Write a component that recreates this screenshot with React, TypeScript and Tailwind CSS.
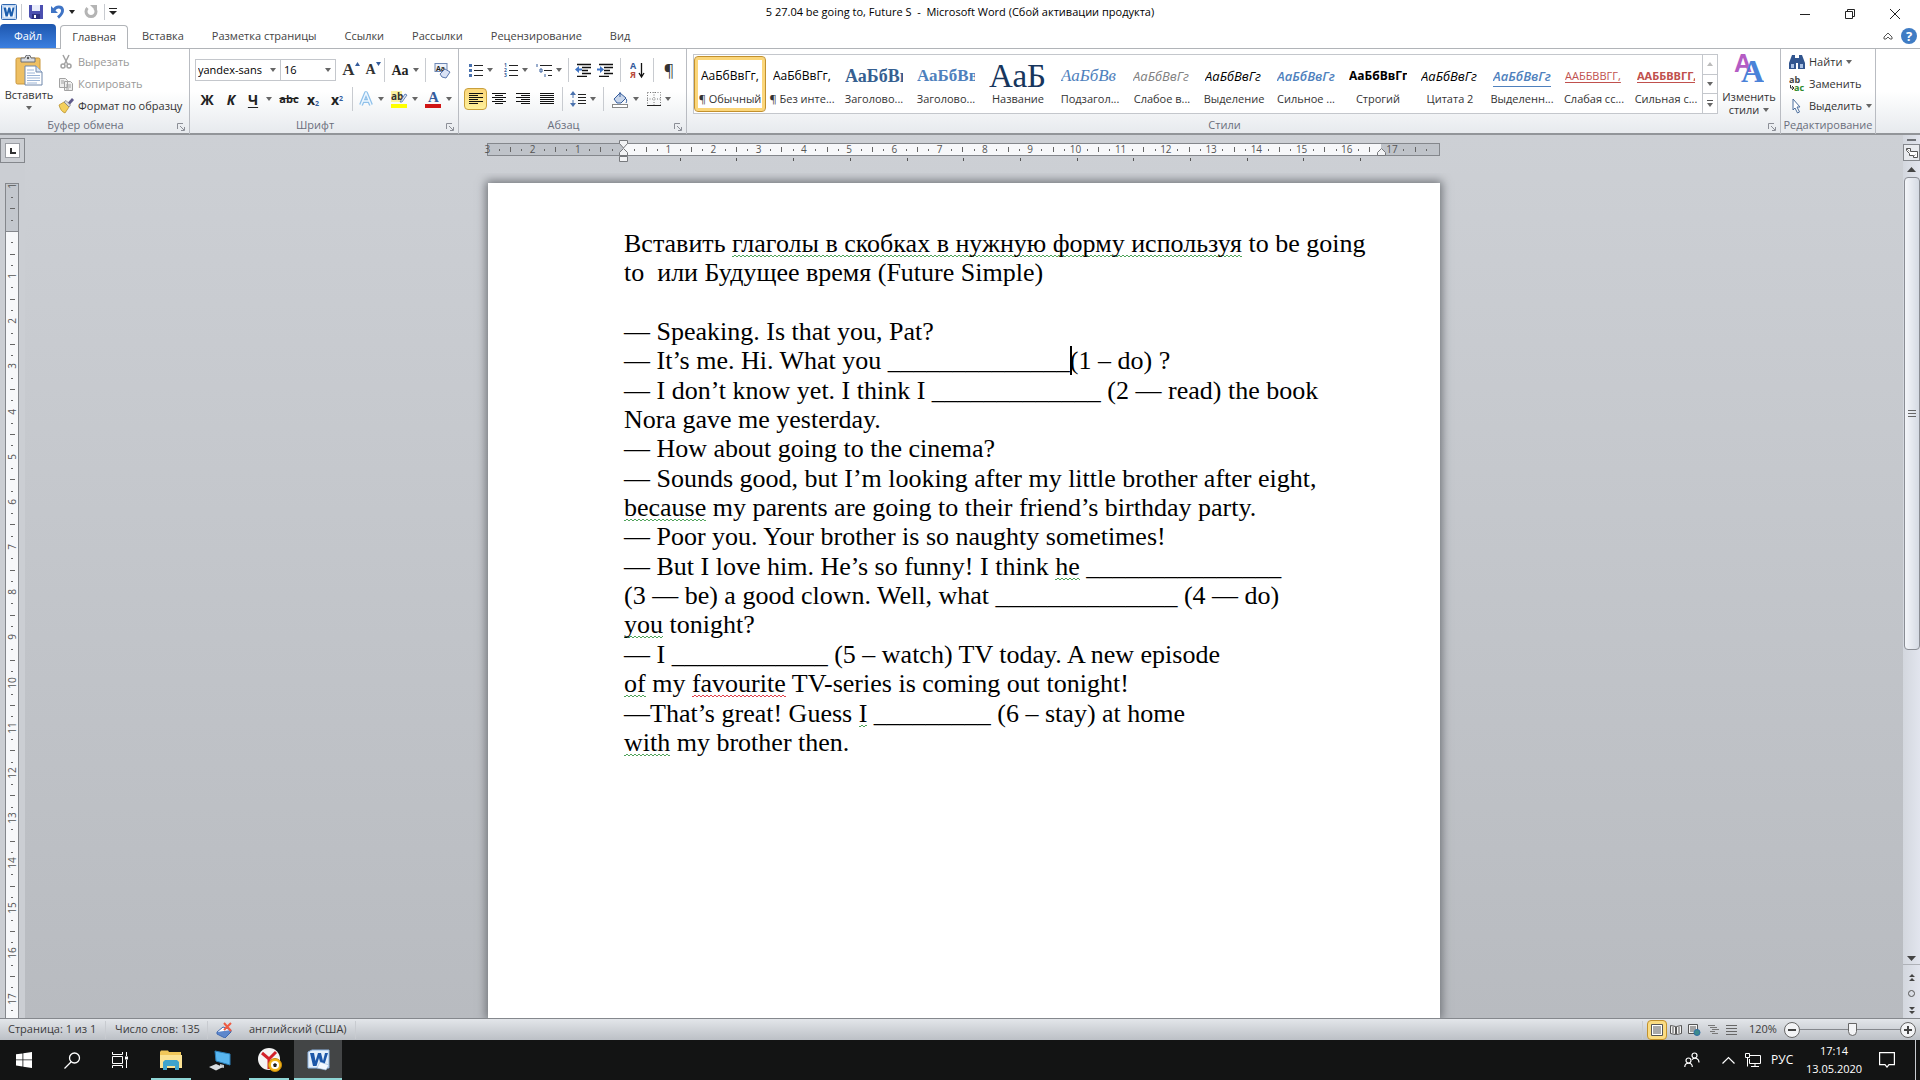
import { ReactNode } from 'react'
import clsx from 'clsx'

const tabs = ['Вставка', 'Разметка страницы', 'Ссылки', 'Рассылки', 'Рецензирование', 'Вид']

const styleItems = [
    { name: '¶ Обычный', sample: 'АаБбВвГг,', look: 'text-[12px] text-black', active: true },
    { name: '¶ Без инте...', sample: 'АаБбВвГг,', look: 'text-[12px] text-black' },
    { name: 'Заголово...', sample: 'АаБбВв', look: "font-['Liberation_Serif',serif] text-[18px] font-bold text-[#365f91]" },
    { name: 'Заголово...', sample: 'АаБбВв', look: "font-['Liberation_Serif',serif] text-[17px] font-bold text-[#4f81bd]" },
    { name: 'Название', sample: 'АаБ', look: "font-['Liberation_Serif',serif] text-[33px] text-[#17365d]" },
    { name: 'Подзагол...', sample: 'АаБбВв', look: "font-['Liberation_Serif',serif] text-[17px] italic text-[#4f81bd]" },
    { name: 'Слабое в...', sample: 'АаБбВвГг', look: 'text-[13px] italic text-[#808080]' },
    { name: 'Выделение', sample: 'АаБбВвГг', look: 'text-[13px] italic text-black' },
    { name: 'Сильное ...', sample: 'АаБбВвГг', look: 'text-[13px] font-semibold italic text-[#4f81bd]' },
    { name: 'Строгий', sample: 'АаБбВвГг,', look: 'text-[12px] font-bold text-black' },
    { name: 'Цитата 2', sample: 'АаБбВвГг', look: 'text-[13px] italic text-black' },
    { name: 'Выделенн...', sample: 'АаБбВвГг', look: 'text-[13px] font-semibold italic text-[#4f81bd] border-b border-[#4f81bd]' },
    { name: 'Слабая сс...', sample: 'ААББВВГГ,', look: 'text-[11px] text-[#c0504d] underline underline-offset-2' },
    { name: 'Сильная с...', sample: 'ААББВВГГ,', look: 'text-[11px] font-bold text-[#c0504d] underline underline-offset-2' },
]

const CM = 45.24

function Chevron({ className = 'text-[#666]' }: { className?: string }) {
    return (
        <svg width="6" height="4" viewBox="0 0 6 4" className={clsx('shrink-0', className)}>
            <path d="M0 0h6L3 4z" fill="currentColor" />
        </svg>
    )
}

function Divider({ className = 'h-[22px]' }: { className?: string }) {
    return <span className={clsx('w-px shrink-0 bg-[#c8cbd0]', className)} />
}

function IconButton({ label, className, children, drop }: { label: string; className: string; children: ReactNode; drop?: boolean }) {
    return (
        <button aria-label={label} className={clsx('flex h-[22px] shrink-0 items-center justify-center gap-1', className)}>
            {children}
            {drop && <Chevron />}
        </button>
    )
}

function Group({ title, launcher, className, children }: { title: string; launcher?: boolean; className?: string; children: ReactNode }) {
    return (
        <section className={clsx('flex h-[85px] flex-col border-r border-[#b9bcc2]', className)}>
            <div className="h-[68px]">{children}</div>
            <div className={clsx('relative flex h-[17px] items-center justify-center text-[#6a6e7c]', launcher && 'pr-[18px]')}>
                <span>{title}</span>
                {launcher && (
                    <button aria-label={title} className="absolute right-1 top-1.5">
                        <svg width="8" height="8" viewBox="0 0 8 8" fill="none" stroke="#8b8e96">
                            <path d="M.5 6V.5H6" />
                            <path d="M3 3l4 4M7.500 4v3.500H4" />
                        </svg>
                    </button>
                )}
            </div>
        </section>
    )
}

function Lines({ rows, width = 14 }: { rows: number[][]; width?: number }) {
    return (
        <svg width={width} height="14" viewBox={`0 0 ${width} 14`} shapeRendering="crispEdges">
            {rows.map(([x, w], i) => (
                <rect key={i} x={x} y={1 + i * 2} width={w} height="1" fill="#111" />
            ))}
        </svg>
    )
}

function WordLogo({ size }: { size: number }) {
    return (
        <svg width={size} height={size} viewBox="0 0 16 16">
            <rect x=".5" y=".5" width="15" height="15" rx="1" fill="#d6e6f8" stroke="#2f67b0" />
            <rect x="2" y="2" width="12" height="12" fill="#f4f9ff" stroke="#7fa9dc" strokeWidth=".5" />
            <path d="M2.500 3.500h2.500l1 5 1.300-5h2l1.200 5 1-5h2l-2 9H9.200L8 8l-1.300 4.500H4.500z" fill="#1d5fae" />
        </svg>
    )
}

function TitleBar() {
    return (
        <header className="flex h-6 items-center bg-white">
            <div className="flex flex-1 items-center">
                <span className="ml-px">
                    <WordLogo size={16} />
                </span>
                <Divider className="ml-1 h-4" />
                <button aria-label="Сохранить" className="ml-[7px]">
                    <svg width="14" height="14" viewBox="0 0 14 14">
                        <path d="M0 0h14v14H2l-2-2z" fill="#4b4fb0" />
                        <path d="M3 0h8v6H3z" fill="#e8ecfa" />
                        <path d="M3 9h8v5H3z" fill="#2b2f80" />
                        <path d="M5 10h2v3H5z" fill="#fff" />
                    </svg>
                </button>
                <button aria-label="Отменить" className="ml-2">
                    <svg width="14" height="14" viewBox="0 0 14 14" fill="none">
                        <path d="M3 5c2-4 8-4 8.500 0 .3 3-1.500 5-4.500 7.500" stroke="#3f74c5" strokeWidth="3" />
                        <path d="M0 1v7h7z" fill="#3f74c5" />
                    </svg>
                </button>
                <Chevron className="ml-1 text-[#222]" />
                <button aria-label="Повторить" className="ml-[9px]">
                    <svg width="14" height="14" viewBox="0 0 14 14" fill="none">
                        <path d="M3.500 3a5 5 0 1 0 7 0" stroke="#b4b4b4" strokeWidth="3" />
                        <path d="M6 0h7v7z" fill="#b4b4b4" />
                    </svg>
                </button>
                <Divider className="ml-[6px] h-4" />
                <button aria-label="Настройка панели быстрого доступа" className="ml-1">
                    <svg width="8" height="8" viewBox="0 0 8 8">
                        <path d="M0 0h8v1H0zM0 3h8L4 7z" fill="#222" />
                    </svg>
                </button>
            </div>
            <h1 className="whitespace-pre pt-px text-black">5 27.04 be going to, Future S  -  Microsoft Word (Сбой активации продукта)</h1>
            <div className="flex flex-1 justify-end">
                <div className="flex items-center gap-[35px] pr-5 pt-1">
                    <button aria-label="Свернуть">
                        <svg width="10" height="10" viewBox="0 0 10 10"><path d="M0 5.500h10" stroke="#222" /></svg>
                    </button>
                    <button aria-label="Восстановить">
                        <svg width="10" height="10" viewBox="0 0 10 10" fill="none" stroke="#222">
                            <path d="M.5 2.500h7v7h-7zM2.500 2.500v-2h7v7h-2" />
                        </svg>
                    </button>
                    <button aria-label="Закрыть">
                        <svg width="10" height="10" viewBox="0 0 10 10"><path d="M0 0l10 10M10 0L0 10" stroke="#222" /></svg>
                    </button>
                </div>
            </div>
        </header>
    )
}

function TabBar() {
    return (
        <nav className="flex h-[25px] items-end border-b border-[#b1b4b8] bg-white text-[#444]">
            <button className="h-6 w-14 rounded-t bg-gradient-to-b from-[#1e57ae] to-[#3b7fe0] pt-px text-white">Файл</button>
            <button className="relative -mb-px ml-1 h-6 w-[68px] rounded-t border border-b-0 border-[#b1b4b8] bg-white">Главная</button>
            {tabs.map((tab) => (
                <button key={tab} className="h-6 px-[14px] pt-px">{tab}</button>
            ))}
            <div className="ml-auto flex h-6 items-center gap-2 pr-[3px]">
                <button aria-label="Свернуть ленту">
                    <svg width="10" height="8" viewBox="0 0 10 8" fill="none" stroke="#555">
                        <path d="M1 5l4-4 4 4v2H7L5 5 3 7H1z" />
                    </svg>
                </button>
                <button aria-label="Справка" className="flex size-4 items-center justify-center rounded-full bg-[#3f7cc4] text-[13px] font-bold leading-none text-white">?</button>
            </div>
        </nav>
    )
}

function ClipboardGroup() {
    return (
        <Group title="Буфер обмена" launcher className="w-[190px]">
            <div className="flex pt-[2px]">
                <button className="flex w-[58px] flex-col items-center pt-1 leading-4">
                    <svg width="28" height="31" viewBox="0 0 28 31">
                        <rect x="1" y="3" width="24" height="26" rx="1.500" fill="#eebf62" stroke="#c9973c" />
                        <path d="M6 7V3h4a3 3 0 0 1 6 0h4v4z" fill="#d8dbe0" stroke="#6d7178" />
                        <circle cx="13" cy="3" r="1.200" fill="#555" />
                        <path d="M10 11h11l6 6v13H10z" fill="#fff" stroke="#6f87ab" />
                        <path d="M21 11v6h6" fill="#dbe6f5" stroke="#6f87ab" />
                        <path d="M12 15h7M12 18h8M12 20.500h13M12 23h13M12 25.500h13M12 28h10" stroke="#9bb4d6" />
                    </svg>
                    <span className="mt-px">Вставить</span>
                    <Chevron className="mt-[3px] text-[#666]" />
                </button>
                <div className="flex flex-col whitespace-nowrap">
                    <button className="flex h-[22px] items-center gap-1 text-[#999]">
                        <svg width="16" height="16" viewBox="0 0 16 16" fill="none" stroke="#a2a2a2" strokeWidth="1.500">
                            <path d="M5 1l4.500 9M11 1L6.500 10" />
                            <circle cx="5" cy="12" r="2" />
                            <circle cx="11" cy="12" r="2" />
                        </svg>
                        Вырезать
                    </button>
                    <button className="flex h-[22px] items-center gap-1 text-[#999]">
                        <svg width="16" height="16" viewBox="0 0 16 16" fill="#eee" stroke="#a2a2a2">
                            <path d="M1.500 2.500h6l2 2v7h-8zM6.500 5.500h6l2 2v7h-8z" />
                            <path d="M3 5h3M3 7h3M8 9h5M8 11h5M8 13h3" />
                        </svg>
                        Копировать
                    </button>
                    <button className="flex h-[22px] items-center gap-1">
                        <svg width="16" height="16" viewBox="0 0 16 16">
                            <path d="M1 7l5-3 5 5-4 6C4 14 2 11 1 7z" fill="#f3cf5c" stroke="#b38a24" strokeWidth=".7" />
                            <path d="M6 4l2-1.500 4.500 4.500L11 9z" fill="#d7d9de" stroke="#777" strokeWidth=".7" />
                            <path d="M10 4.500L14 0l2 2-4 4.500z" fill="#5e5a8a" />
                        </svg>
                        Формат по образцу
                    </button>
                </div>
            </div>
        </Group>
    )
}

function FontGroup() {
    return (
        <Group title="Шрифт" launcher className="w-[269px]">
            <div className="flex flex-col gap-[7px] pl-[5px] pt-[10px]">
                <div className="flex h-[22px] items-center">
                    <div className="flex h-[22px] w-[86px] items-center border border-[#c4c7cc] bg-white pr-1">
                        <select aria-label="Шрифт" className="min-w-0 flex-1 appearance-none bg-transparent pl-[2px] text-black outline-none">
                            <option>yandex-sans</option>
                        </select>
                        <Chevron />
                    </div>
                    <div className="-ml-px flex h-[22px] w-[56px] items-center border border-[#c4c7cc] bg-white pr-1">
                        <select aria-label="Размер шрифта" className="min-w-0 flex-1 appearance-none bg-transparent pl-[3px] text-black outline-none">
                            <option>16</option>
                        </select>
                        <Chevron />
                    </div>
                    <IconButton label="Увеличить размер" className="ml-1 w-[22px] font-['Liberation_Serif',serif] text-[17px] font-bold text-[#333]">
                        <span className="flex items-start leading-4">A<svg width="5" height="4" viewBox="0 0 5 4"><path d="M0 4h5L2.500 0z" fill="#345c9c" /></svg></span>
                    </IconButton>
                    <IconButton label="Уменьшить размер" className="w-[22px] font-['Liberation_Serif',serif] text-[14px] font-bold text-[#333]">
                        <span className="flex items-start leading-4">A<svg width="5" height="4" viewBox="0 0 5 4"><path d="M0 0h5L2.500 4z" fill="#345c9c" /></svg></span>
                    </IconButton>
                    <Divider className="h-6" />
                    <IconButton label="Регистр" drop className="w-10 font-['Liberation_Serif',serif] text-[14px] font-bold text-[#222]">Aa</IconButton>
                    <Divider className="h-6" />
                    <IconButton label="Очистить формат" className="w-8">
                        <svg width="17" height="17" viewBox="0 0 17 17">
                            <rect x="1" y="1.500" width="12" height="8" fill="#eef2fa" stroke="#6d87b5" />
                            <text x="2" y="8.500" fontSize="7" fontWeight="bold" fill="#222">Aa</text>
                            <path d="M6 12l5-5 5 3-4 6-4-1z" fill="#d9e2f5" stroke="#5a77ad" />
                        </svg>
                    </IconButton>
                </div>
                <div className="flex h-[22px] items-center font-bold text-[#222]">
                    <IconButton label="Полужирный" className="w-6 text-[14px]">Ж</IconButton>
                    <IconButton label="Курсив" className="w-6 text-[14px] italic">К</IconButton>
                    <IconButton label="Подчеркнутый" drop className="w-[34px] text-[14px]"><span className="mr-1 underline underline-offset-2">Ч</span></IconButton>
                    <IconButton label="Зачеркнутый" className="w-6 text-[11px] line-through">abc</IconButton>
                    <IconButton label="Подстрочный" className="w-6 text-[14px]"><span>x<sub className="text-[7px] text-[#345c9c]">2</sub></span></IconButton>
                    <IconButton label="Надстрочный" className="w-6 text-[14px]"><span>x<sup className="text-[7px] text-[#345c9c]">2</sup></span></IconButton>
                    <Divider className="mx-[3px] h-6" />
                    <IconButton label="Эффекты" drop className="w-[30px]">
                        <svg width="16" height="16" viewBox="0 0 16 16" fill="none">
                            <path d="M3 14L8 2l5 12M5 10h6" stroke="#8fc1ea" strokeWidth="4" strokeLinejoin="round" />
                            <path d="M3 14L8 2l5 12M5 10h6" stroke="#eef7ff" strokeWidth="1.500" />
                        </svg>
                    </IconButton>
                    <IconButton label="Цвет выделения" drop className="w-9">
                        <svg width="17" height="17" viewBox="0 0 17 17">
                            <rect x="0" y="0" width="11" height="11" fill="#fbf3a0" />
                            <text x="0" y="9" fontSize="10" fontWeight="bold" fill="#333">ab</text>
                            <path d="M9 11l5-8 2 1-5 7z" fill="#dfe6f3" stroke="#4b6ea8" strokeWidth=".8" />
                            <rect y="13" width="16" height="4" fill="#ffff00" />
                        </svg>
                    </IconButton>
                    <IconButton label="Цвет текста" drop className="w-[33px]">
                        <svg width="17" height="17" viewBox="0 0 17 17">
                            <text x="3" y="11" fontSize="15" fontWeight="bold" fontFamily="Liberation Serif" fill="#345c9c">A</text>
                            <rect y="13" width="16" height="4" fill="#d01515" />
                        </svg>
                    </IconButton>
                </div>
            </div>
        </Group>
    )
}

function ListIcon({ marks }: { marks: string[] }) {
    return (
        <svg width="14" height="14" viewBox="0 0 14 14">
            {marks.map((mark, i) => (
                <text key={i} x="0" y={4 + i * 5} fontSize="5" fontWeight="bold" fill="#345c9c">{mark}</text>
            ))}
            <path d="M5 2.500h9M5 7.500h9M5 12.500h9" stroke="#222" />
        </svg>
    )
}

function IndentIcon({ back }: { back?: boolean }) {
    return (
        <svg width="16" height="14" viewBox="0 0 16 14">
            <path d="M2 1.500h14M7 4.500h9M7 7.500h6M7 10.500h9M2 13.500h10" stroke="#111" strokeWidth="1.500" />
            <path d={back ? 'M0 6.500L4 3v2.500h3v2H4V10z' : 'M7 6.500L3 3v2.500H0v2h3V10z'} fill="#3f74c5" />
        </svg>
    )
}

function ParagraphGroup() {
    return (
        <Group title="Абзац" launcher className="w-[228px]">
            <div className="flex flex-col gap-[7px] pl-[5px] pt-[10px]">
                <div className="flex h-[22px] items-center">
                    <IconButton label="Маркеры" drop className="w-[34px]">
                        <svg width="14" height="14" viewBox="0 0 14 14">
                            <path d="M0 1h3v3H0zM0 6h3v3H0zM0 11h3v3H0z" fill="#4a72ae" />
                            <path d="M5 2.500h9M5 7.500h9M5 12.500h9" stroke="#222" />
                        </svg>
                    </IconButton>
                    <IconButton label="Нумерация" drop className="w-[35px]"><ListIcon marks={['1', '2', '3']} /></IconButton>
                    <IconButton label="Многоуровневый список" drop className="w-[32px]">
                        <svg width="16" height="15" viewBox="0 0 16 15">
                            <path d="M1 1v3M4 6h2v3H4zM9 11v3" stroke="#345c9c" fill="none" />
                            <path d="M4 2.500h12M8 7.500h8M12 12.500h4" stroke="#222" />
                        </svg>
                    </IconButton>
                    <Divider className="mx-[3px] h-6" />
                    <IconButton label="Уменьшить отступ" className="w-[22px]"><IndentIcon back /></IconButton>
                    <IconButton label="Увеличить отступ" className="w-[22px]"><IndentIcon /></IconButton>
                    <Divider className="mx-1 h-6" />
                    <IconButton label="Сортировка" className="w-6">
                        <svg width="15" height="17" viewBox="0 0 15 17">
                            <text x="0" y="7" fontSize="9" fontWeight="bold" fill="#345c9c">А</text>
                            <text x="0" y="16" fontSize="9" fontWeight="bold" fill="#b8483b">Я</text>
                            <path d="M11.500 1v13M9 11l2.500 4 2.500-4" stroke="#111" strokeWidth="1.300" fill="none" />
                        </svg>
                    </IconButton>
                    <Divider className="mx-1 h-6" />
                    <IconButton label="Показать знаки" className="w-[22px] text-[16px] text-[#333]">¶</IconButton>
                </div>
                <div className="flex h-[22px] items-center">
                    <IconButton label="По левому краю" className="w-[23px] rounded border border-[#c9a03c] bg-gradient-to-b from-[#fbd67a] to-[#fdf09a]">
                        <Lines rows={[[0, 14], [0, 9], [0, 14], [0, 9], [0, 14], [0, 9]]} />
                    </IconButton>
                    <IconButton label="По центру" className="w-6"><Lines rows={[[0, 14], [3, 8], [0, 14], [3, 8], [0, 14], [3, 8]]} /></IconButton>
                    <IconButton label="По правому краю" className="w-6"><Lines rows={[[0, 14], [5, 9], [0, 14], [5, 9], [0, 14], [5, 9]]} /></IconButton>
                    <IconButton label="По ширине" className="w-[23px]"><Lines rows={[[0, 14], [0, 14], [0, 14], [0, 14], [0, 14], [0, 14]]} /></IconButton>
                    <Divider className="mx-1 h-6" />
                    <IconButton label="Интервал" drop className="w-8">
                        <svg width="16" height="16" viewBox="0 0 16 16">
                            <path d="M3 0l3 4H0zM3 16l3-4H0z" fill="#4a72ae" />
                            <path d="M3 4v3M3 9v3" stroke="#4a72ae" />
                            <path d="M8 3.500h8M8 6.500h8M8 9.500h8M8 12.500h8" stroke="#222" />
                        </svg>
                    </IconButton>
                    <Divider className="mx-1 h-6" />
                    <IconButton label="Заливка" drop className="w-[34px]">
                        <svg width="17" height="17" viewBox="0 0 17 17">
                            <path d="M2 8l6-6 6 5-5 5H5z" fill="#c9d6ea" stroke="#345c9c" />
                            <path d="M8 6V1M13 7c2 1 2 3 1 5" stroke="#345c9c" fill="none" />
                            <rect x=".5" y="13.500" width="15" height="3" fill="#fff" stroke="#888" />
                        </svg>
                    </IconButton>
                    <IconButton label="Границы" drop className="w-[34px]">
                        <svg width="14" height="14" viewBox="0 0 14 14" fill="none" stroke="#777">
                            <path d="M.5 .5h13v13M.5 .5v13M7 0v13M0 7h14" strokeDasharray="1 1.500" />
                            <path d="M0 13.500h14" stroke="#222" />
                        </svg>
                    </IconButton>
                </div>
            </div>
        </Group>
    )
}

function StylesGroup() {
    return (
        <Group title="Стили" launcher className="min-w-0 flex-1">
            <div className="flex pl-[6px] pt-[5px]">
                <div className="flex h-[60px] border border-[#c4c7cc] bg-white">
                    {styleItems.map((item, i) => (
                        <button
                            key={i}
                            className={clsx(
                                'mt-px flex h-14 w-[72px] flex-col items-center rounded-sm border pt-[7px]',
                                item.active ? 'border-[#c2912e] shadow-[inset_0_0_0_3px_#fbd67a]' : 'border-transparent',
                            )}
                        >
                            <span className="flex h-6 w-[58px] items-center overflow-hidden">
                                <span className={clsx('whitespace-nowrap leading-5', item.look)}>{item.sample}</span>
                            </span>
                            <span className="mt-[3px] whitespace-nowrap text-[#333]">{item.name}</span>
                        </button>
                    ))}
                    <div className="flex w-[15px] flex-col divide-y divide-[#c4c7cc] border-l border-[#c4c7cc]">
                        <button aria-label="Вверх" className="flex flex-1 items-center justify-center"><Chevron className="rotate-180 text-[#bbb]" /></button>
                        <button aria-label="Вниз" className="flex flex-1 items-center justify-center"><Chevron /></button>
                        <button aria-label="Все стили" className="flex flex-1 flex-col items-center justify-center gap-[2px]">
                            <span className="h-px w-[6px] bg-[#555]" />
                            <Chevron />
                        </button>
                    </div>
                </div>
                <button className="ml-px flex w-[60px] flex-col items-center leading-[13px]">
                    <svg width="30" height="30" viewBox="0 0 30 30">
                        <text x="0" y="18" fontSize="25" fontWeight="bold" fontFamily="Liberation Sans" fill="#b45cc4">A</text>
                        <text x="7" y="28" fontSize="32" fontWeight="bold" fontFamily="Liberation Serif" fill="#4a82d8">A</text>
                    </svg>
                    <span className="mt-[6px]">Изменить</span>
                    <span className="flex items-center gap-1">стили <Chevron /></span>
                </button>
            </div>
        </Group>
    )
}

function EditingGroup() {
    return (
        <Group title="Редактирование" className="w-[95px]">
            <div className="flex flex-col pl-2 pt-[2px]">
                <button className="flex h-[22px] items-center gap-1">
                    <svg width="16" height="14" viewBox="0 0 16 14">
                        <path d="M3 0h3v3h4V0h3l3 8v6H9V8H7v6H0V8z" fill="#31558f" />
                        <path d="M2 9h3v4H2zM11 9h3v4h-3z" fill="#a9c0e4" />
                    </svg>
                    Найти <Chevron />
                </button>
                <button className="flex h-[22px] items-center gap-1">
                    <svg width="16" height="16" viewBox="0 0 16 16">
                        <text x="0" y="7" fontSize="9" fontWeight="bold" fill="#444">ab</text>
                        <text x="5" y="15" fontSize="9" fontWeight="bold" fill="#2c8a2c">ac</text>
                        <path d="M1.500 9v3h3M3 10l2 2-2 2" stroke="#333" fill="none" />
                    </svg>
                    Заменить
                </button>
                <button className="flex h-[22px] items-center gap-1">
                    <svg width="16" height="16" viewBox="0 0 16 16">
                        <path d="M4 1l7 8H8l2.500 5-2 1L6 10l-2 2z" fill="#fff" stroke="#4d6f9e" />
                    </svg>
                    Выделить <Chevron />
                </button>
            </div>
        </Group>
    )
}

function HorizontalRuler() {
    const zero = 136
    const ticks = Array.from({ length: 84 }, (_, i) => i - 12)
    return (
        <svg width="954" height="24" viewBox="0 0 954 24" className="mx-auto block overflow-visible">
            <rect x=".5" y="3.500" width="952" height="12" fill="#bfc3c9" stroke="#84878c" />
            <rect x={zero} y="4" width="758" height="11" fill="#f7f8fa" />
            {ticks.map((n) => {
                const x = zero + (n * CM) / 4
                if (n === 0 || n === 67) return null
                if (n % 4 === 0) return <text key={n} x={x} y="13" fontSize="10" textAnchor="middle" fill="#555">{Math.abs(n / 4)}</text>
                if (n % 2 === 0) return <path key={n} d={`M${Math.round(x) + 0.5} 7v5`} stroke="#666" />
                return <path key={n} d={`M${Math.round(x) + 0.5} 9v2`} stroke="#666" />
            })}
            {Array.from({ length: 13 }, (_, i) => (
                <path key={i} d={`M${Math.round(zero + (i + 1) * 56.7) + 0.5} 18v3`} stroke="#555" />
            ))}
            <path d="M132.500.5h8v3l-4 4.500-4-4.500zM136.500 8.500l4 4v3h-8v-3zM132.500 16.500h8v5h-8z" fill="#f2f3f5" stroke="#77797d" />
            <path d="M894.500 8.500l4 4v3h-8v-3z" fill="#f2f3f5" stroke="#77797d" />
        </svg>
    )
}

function VerticalRuler() {
    const zero = 48
    const ticks = Array.from({ length: 73 }, (_, i) => i - 3)
    return (
        <svg width="14" height="836" viewBox="0 0 14 836" className="ml-[5px] mt-5 block shrink-0">
            <rect x=".5" y=".5" width="13" height="850" fill="#f7f8fa" stroke="#84878c" />
            <rect x=".5" y=".5" width="13" height="48" fill="#c3c7cd" stroke="#84878c" />
            {ticks.map((n) => {
                const y = zero + (n * 45.15) / 4
                if (n === 0) return null
                if (n % 4 === 0) {
                    return <text key={n} transform={`translate(11 ${Math.round(y)}) rotate(-90)`} fontSize="10" textAnchor="middle" fill="#555">{n / 4}</text>
                }
                return <path key={n} d={n % 2 === 0 ? `M5 ${Math.round(y) + 0.5}h5` : `M6 ${Math.round(y) + 0.5}h2`} stroke="#666" />
            })}
            <text transform="translate(11 3) rotate(-90)" fontSize="10" textAnchor="middle" fill="#555">1</text>
        </svg>
    )
}

// two rows of 2px dashes, the lower one shifted, make the zigzag
const zigzag = 'bg-repeat-x bg-[length:4px_1px] bg-[position:0_calc(100%-1px),0_calc(100%-2px)]'

function Grammar({ children }: { children: ReactNode }) {
    return <span className={clsx(zigzag, 'bg-[linear-gradient(90deg,#4fa35a_2px,transparent_2px),linear-gradient(90deg,transparent_2px,#4fa35a_2px)]')}>{children}</span>
}

function Spelling({ children }: { children: ReactNode }) {
    return <span className={clsx(zigzag, 'bg-[linear-gradient(90deg,#e0404a_2px,transparent_2px),linear-gradient(90deg,transparent_2px,#e0404a_2px)]')}>{children}</span>
}

function Page() {
    return (
        <article className="mx-auto min-h-full w-[952px] bg-white pl-[136px] pt-[46px] font-['Liberation_Serif','Times_New_Roman',serif] text-[26px] leading-[29px] text-black shadow-[0_0_9px_2px_#6f7277]">
            <div className="flex flex-col gap-px whitespace-nowrap">
                <p>
                    Вставить <Grammar>глаголы в скобках в нужную форму используя</Grammar> to be going<br />
                    to&nbsp; или Будущее время (Future Simple)
                </p>
                <p>
                    <br />
                    — Speaking. Is that you, Pat?<br />
                    — It’s me. Hi. What you ______________<span className="relative"><span className="absolute left-0 top-0 h-[29px] w-[2px] bg-black" /></span>(1 – do) ?
                </p>
                <p>
                    — I don’t know yet. I think I _____________ (2 — read) the book<br />
                    Nora gave me yesterday.<br />
                    — How about going to the cinema?
                </p>
                <p>
                    — Sounds good, but I’m looking after my little brother after eight,<br />
                    <Grammar>because</Grammar> my parents are going to their friend’s birthday party.<br />
                    — Poor you. Your brother is so naughty sometimes!
                </p>
                <p>
                    — But I love him. He’s so funny! I think <Grammar>he</Grammar> _______________<br />
                    (3 — be) a good clown. Well, what ______________ (4 — do)<br />
                    <Grammar>you</Grammar> tonight?
                </p>
                <p>
                    — I ____________ (5 – watch) TV today. A new episode<br />
                    <Grammar>of</Grammar> my <Spelling>favourite</Spelling> TV-series is coming out tonight!
                </p>
                <p>
                    —That’s great! Guess <Grammar>I</Grammar> _________ (6 – stay) at home<br />
                    <Grammar>with</Grammar> my brother then.
                </p>
            </div>
        </article>
    )
}

function Scrollbar() {
    return (
        <aside className="flex w-[17px] shrink-0 flex-col items-center bg-gradient-to-r from-[#d3d7de] to-[#e2e5ee] text-[#444]">
            <span className="mt-1 h-[2px] w-[9px] bg-[#6f7277]" />
            <button aria-label="Линейка" className="mt-[3px] flex size-[17px] items-center justify-center border border-[#84878c] bg-[#e9ebef]">
                <svg width="12" height="12" viewBox="0 0 12 12" fill="#fff" stroke="#555">
                    <path d="M.5 3.500v-2h4v3h7v6h-4v-2h-4v-2z" />
                    <path d="M1 2l3 3M7 10l3-3" strokeDasharray="1 1" />
                </svg>
            </button>
            <button aria-label="Вверх" className="flex h-4 items-center">
                <svg width="9" height="5" viewBox="0 0 9 5"><path d="M0 5h9L4.500 0z" fill="currentColor" /></svg>
            </button>
            <div className="flex w-full flex-1 flex-col items-center">
                <div className="flex h-[61%] w-4 flex-col items-center justify-center gap-[2px] rounded-sm border border-[#8a8d94] bg-gradient-to-r from-[#f4f6fa] to-[#d5dae3]">
                    <span className="h-px w-2 bg-[#666]" />
                    <span className="h-px w-2 bg-[#666]" />
                    <span className="h-px w-2 bg-[#666]" />
                </div>
            </div>
            <div className="flex h-[65px] w-full flex-col items-center justify-between pb-1">
                <button aria-label="Вниз" className="flex h-3 w-full items-center justify-center border-b border-[#aeb1b7]">
                    <svg width="9" height="5" viewBox="0 0 9 5"><path d="M0 0h9L4.500 5z" fill="currentColor" /></svg>
                </button>
                <button aria-label="Предыдущая страница">
                    <svg width="6" height="8" viewBox="0 0 6 8"><path d="M3 0l3 3H0zM3 4l3 3H0z" fill="currentColor" /></svg>
                </button>
                <button aria-label="Выбор объекта" className="size-[7px] rounded-full border border-[#555]" />
                <button aria-label="Следующая страница">
                    <svg width="6" height="8" viewBox="0 0 6 8"><path d="M3 4L6 1H0zM3 8l3-3H0z" fill="currentColor" /></svg>
                </button>
            </div>
        </aside>
    )
}

function StatusBar() {
    return (
        <footer className="flex h-[22px] shrink-0 items-center border-t border-[#85888d] bg-gradient-to-b from-[#e3e6ea] to-[#bcc0c6] text-[#3b3b3b]">
            <button className="w-[105px] whitespace-nowrap pl-2 text-left">Страница: 1 из 1</button>
            <Divider className="h-[18px] bg-[#9a9da3]" />
            <button className="w-[101px] whitespace-nowrap pl-[9px] text-left">Число слов: 135</button>
            <Divider className="h-[18px] bg-[#9a9da3]" />
            <button aria-label="Правописание" className="ml-2">
                <svg width="17" height="16" viewBox="0 0 17 16">
                    <path d="M1 10l6-5 8 3-6 6z" fill="#fff" stroke="#3f68b0" />
                    <path d="M1 10v2l8 4 6-6V8" fill="#5d87cc" stroke="#3f68b0" />
                    <path d="M8 1l7 8M15 1L8 8" stroke="#ef5a41" strokeWidth="2" />
                </svg>
            </button>
            <button className="ml-4 w-[106px] whitespace-nowrap text-left">английский (США)</button>
            <Divider className="h-[18px] bg-[#9a9da3]" />
            <div className="ml-auto flex items-center">
                <Divider className="mr-1 h-[18px] bg-[#9a9da3]" />
                <button aria-label="Разметка страницы" className="flex size-5 items-center justify-center rounded-sm border border-[#c2912e] bg-[#fbdc82]">
                    <svg width="12" height="12" viewBox="0 0 12 12" fill="#fff" stroke="#555"><path d="M.5 .5h11v11H.5zM2 3h8M2 5h8M2 7h8M2 9h8" /></svg>
                </button>
                <button aria-label="Режим чтения" className="ml-[3px]">
                    <svg width="12" height="12" viewBox="0 0 12 12" fill="#f4f4f4" stroke="#555"><path d="M.5 1.500l5 1v8l-5-1zM11.500 1.500l-5 1v8l5-1zM2 4h2M2 6h2M2 8h2M8 4h2M8 6h2M8 8h2" /></svg>
                </button>
                <button aria-label="Веб-документ" className="ml-[6px]">
                    <svg width="13" height="12" viewBox="0 0 13 12" fill="#f4f4f4" stroke="#555"><path d="M.5 .5h9v9h-9zM2 3h6M2 5h6M2 7h4" /><circle cx="9" cy="8.500" r="3" fill="#3b8a8c" stroke="#2d6da5" /></svg>
                </button>
                <button aria-label="Структура" className="ml-[6px]">
                    <svg width="12" height="12" viewBox="0 0 12 12" stroke="#777"><path d="M1 1.500h7M3 3.500h7M5 5.500h7M3 7.500h5M5 9.500h6" /></svg>
                </button>
                <button aria-label="Черновик" className="ml-[6px]">
                    <svg width="12" height="12" viewBox="0 0 12 12" stroke="#666"><path d="M1 1.500h11M1 4.500h11M1 7.500h11M1 10.500h11" /></svg>
                </button>
                <button className="ml-3 w-[34px] text-left">120%</button>
                <button aria-label="Уменьшить" className="ml-px flex size-4 items-center justify-center rounded-full border border-[#666] bg-[#f3f4f6]"><span className="h-[2px] w-2 bg-[#444]" /></button>
                <input
                    type="range"
                    aria-label="Масштаб"
                    defaultValue={53}
                    className="h-4 w-[100px] appearance-none bg-[linear-gradient(#85888d,#85888d)] bg-[length:100%_1px] bg-center bg-no-repeat [&::-webkit-slider-thumb]:h-[13px] [&::-webkit-slider-thumb]:w-[9px] [&::-webkit-slider-thumb]:appearance-none [&::-webkit-slider-thumb]:rounded-t-xs [&::-webkit-slider-thumb]:rounded-b-full [&::-webkit-slider-thumb]:border [&::-webkit-slider-thumb]:border-[#666] [&::-webkit-slider-thumb]:bg-[#f3f4f6]"
                />
                <button aria-label="Увеличить" className="mr-1 flex size-4 items-center justify-center rounded-full border border-[#666] bg-[#f3f4f6]">
                    <svg width="8" height="8" viewBox="0 0 8 8"><path d="M0 4h8M4 0v8" stroke="#444" strokeWidth="2" /></svg>
                </button>
            </div>
        </footer>
    )
}

function TaskButton({ label, open, active, children }: { label: string; open?: boolean; active?: boolean; children: ReactNode }) {
    return (
        <button aria-label={label} className={clsx('relative flex h-10 w-12 items-center justify-center', active && 'bg-[#434546]')}>
            {children}
            {open && <span className={clsx('absolute bottom-0 h-[2px] bg-[#8fd6d6]', active ? 'inset-x-0' : 'inset-x-1')} />}
        </button>
    )
}

function Taskbar() {
    return (
        <footer className="flex h-10 shrink-0 items-center bg-[#131414] text-white">
            <TaskButton label="Пуск">
                <svg width="16" height="16" viewBox="0 0 16 16" fill="#fff"><path d="M0 2.300l6.500-.9v6.100H0zM7.300 1.300L16 0v7.500H7.300zM0 8.300h6.500v6.200L0 13.600zM7.300 8.300H16V16l-8.700-1.200z" /></svg>
            </TaskButton>
            <TaskButton label="Поиск">
                <svg width="17" height="17" viewBox="0 0 17 17" fill="none" stroke="#fff" strokeWidth="1.300"><circle cx="10.500" cy="6" r="5" /><path d="M7 10L.5 16.500" /></svg>
            </TaskButton>
            <TaskButton label="Представление задач">
                <svg width="17" height="16" viewBox="0 0 17 16" fill="none" stroke="#fff">
                    <path d="M.5 4.500h10v7H.5zM.5 0v2.500h10V0M.5 16v-2.500h10V16M14.500 0v4M14.500 8v8" />
                    <rect x="13.500" y="5" width="2" height="2" fill="#fff" />
                </svg>
            </TaskButton>
            <div className="ml-[3px] flex gap-px">
                <TaskButton label="Проводник" open>
                    <svg width="22" height="20" viewBox="0 0 22 20">
                        <path d="M0 2l1-1.500h7L9 2h12v16H0z" fill="#f0c75a" />
                        <path d="M0 5h22v13H0z" fill="#fbe394" />
                        <path d="M3 20v-8l2-2h12l2 2v8h-4v-4H7v4z" fill="#3fa4cc" />
                    </svg>
                </TaskButton>
                <TaskButton label="Компьютер">
                    <svg width="24" height="21" viewBox="0 0 24 21">
                        <path d="M7 1l15 3v11L8 11z" fill="#58b6f0" stroke="#2b7fb8" />
                        <path d="M12 14l4 1v3l-4-1z" fill="#bfc6cc" />
                        <path d="M1 17l7-3 7 3-7 3.500z" fill="#d9dde0" />
                    </svg>
                </TaskButton>
                <TaskButton label="Яндекс Браузер" open>
                    <svg width="25" height="24" viewBox="0 0 25 24">
                        <circle cx="12" cy="11" r="11" fill="#f4f4f4" />
                        <path d="M5 5l7 6 7-7M12 11v10" stroke="#d3222a" strokeWidth="3" fill="none" />
                        <circle cx="18" cy="17" r="6.500" fill="#f3b71d" stroke="#c98a08" />
                        <circle cx="18" cy="17" r="4" fill="#fff" />
                        <path d="M18 15l2 1.500-.8 2.500h-2.400l-.8-2.500z" fill="#222" />
                    </svg>
                </TaskButton>
                <TaskButton label="Microsoft Word" open active>
                    <svg width="23" height="22" viewBox="0 0 23 22">
                        <path d="M1 3l4-2h17v18H1z" fill="#e4effb" stroke="#8fb5e2" />
                        <path d="M3 4h4l1.500 8L11 4h3l2 8 2-8h3l-4 13h-3l-2-8-2.500 8H6z" fill="#1c56a8" />
                        <path d="M13 13l9 3-3 5-9-2z" fill="#f5f9ff" stroke="#9bbbe0" strokeWidth=".6" />
                    </svg>
                </TaskButton>
            </div>
            <div className="ml-auto flex items-center">
                <button aria-label="Люди">
                    <svg width="16" height="16" viewBox="0 0 16 16" fill="none" stroke="#fff" strokeWidth="1.200">
                        <circle cx="10.500" cy="3.500" r="2.500" />
                        <circle cx="4.500" cy="8.500" r="2.500" />
                        <path d="M.8 15c0-5 7.500-5 7.500 0M8 7.500c3-2.500 7-1 7 3" />
                    </svg>
                </button>
                <button aria-label="Скрытые значки" className="ml-[22px]">
                    <svg width="13" height="8" viewBox="0 0 13 8" fill="none" stroke="#fff" strokeWidth="1.200"><path d="M.5 7.500l6-6 6 6" /></svg>
                </button>
                <button aria-label="Сеть" className="ml-[10px]">
                    <svg width="16" height="15" viewBox="0 0 16 15" fill="none" stroke="#fff"><path d="M5 2.500h10.500v8H4.500V6M10 10.500v3M6 13.500h8M.5 .5h4v4h-4zM2.500 4.500v9" /></svg>
                </button>
                <button className="ml-[10px] w-6 text-left text-[12px]">РУС</button>
                <time className="ml-2 flex w-[62px] flex-col items-center whitespace-nowrap leading-[18px]">
                    <span>17:14</span>
                    <span>13.05.2020</span>
                </time>
                <button aria-label="Уведомления" className="ml-[14px]">
                    <svg width="16" height="16" viewBox="0 0 16 16" fill="none" stroke="#fff" strokeWidth="1.200"><path d="M.6 .6h14.800v12H10l-2 2.500-2-2.500H.6z" /></svg>
                </button>
                <Divider className="ml-5 mr-1 h-10 bg-[#555]" />
            </div>
        </footer>
    )
}

export default function App() {
    return (
        <div className="flex h-screen flex-col overflow-hidden bg-white font-['Open_Sans','Noto_Sans',sans-serif] text-[11px] text-[#333]">
            <TitleBar />
            <TabBar />
            <div className="flex h-[86px] shrink-0 border-b-2 border-[#929599] bg-gradient-to-b from-white from-50% to-[#e7eaee]">
                <ClipboardGroup />
                <FontGroup />
                <ParagraphGroup />
                <StylesGroup />
                <EditingGroup />
                <div className="w-11 shrink-0" />
            </div>
            <main className="flex min-h-0 flex-1 overflow-hidden bg-gradient-to-b from-[#cdd0d5] to-[#b8bbc0]">
                <div className="flex w-[25px] shrink-0 flex-col overflow-hidden bg-[#cbced3]">
                    <button aria-label="Табуляция" className="mt-[3px] flex size-[25px] shrink-0 items-center justify-center border border-[#84878c]">
                        <span className="flex size-[15px] items-center justify-center border border-[#9a9da3] bg-white">
                            <span className="size-[6px] border-b-2 border-l-2 border-[#333]" />
                        </span>
                    </button>
                    <VerticalRuler />
                </div>
                <div className="flex min-w-0 flex-1 flex-col">
                    <div className="h-12 shrink-0 pt-[5px]">
                        <HorizontalRuler />
                    </div>
                    <div className="min-h-0 flex-1 [clip-path:inset(-10px_0_0_0)]">
                        <Page />
                    </div>
                </div>
                <Scrollbar />
            </main>
            <StatusBar />
            <Taskbar />
        </div>
    )
}
